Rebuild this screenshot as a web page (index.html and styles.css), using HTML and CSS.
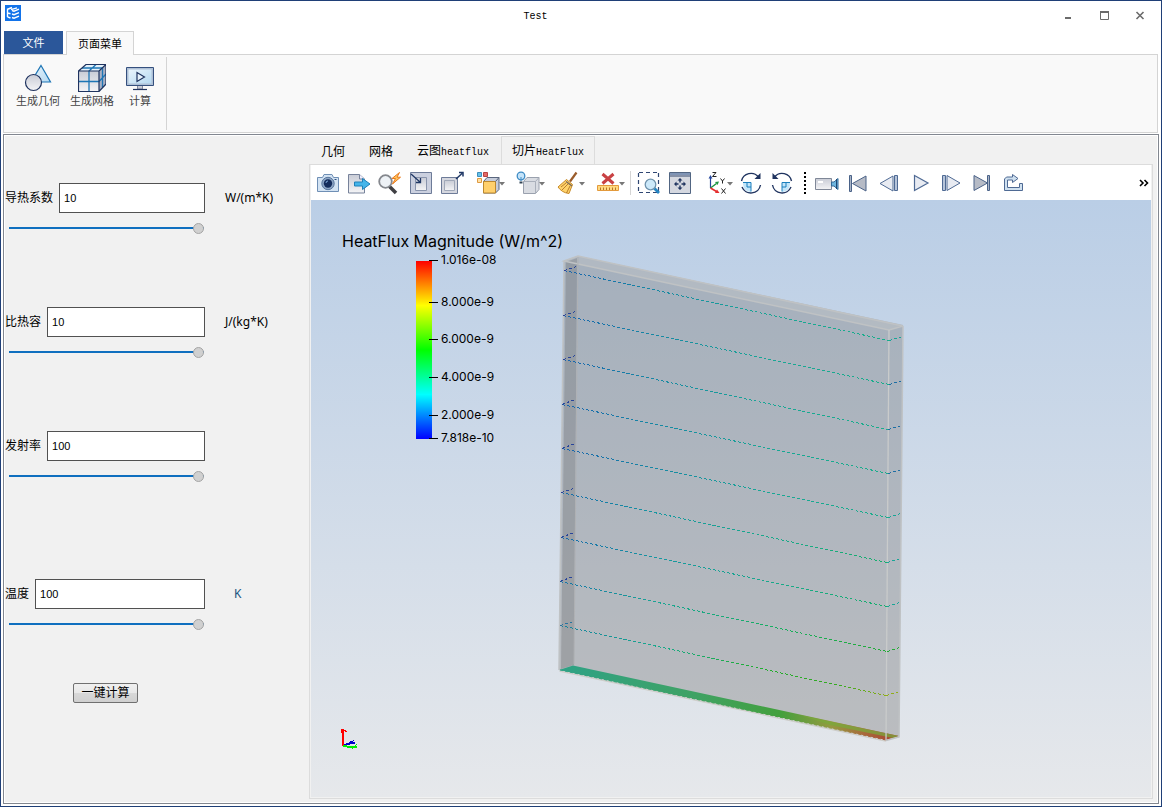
FILE: index.html
```html
<!DOCTYPE html>
<html lang="zh-CN">
<head>
<meta charset="utf-8">
<title>Test</title>
<link rel="stylesheet" href="styles.css">
</head>
<body>
<div class="window">
  <header class="titlebar">
    <svg class="app-icon" viewBox="0 0 16 16" aria-hidden="true">
      <rect width="16" height="16" fill="#1273ea"/>
      <path d="M2 4.500L7 2.500M2.500 4.500V12M2.500 8L5.500 8.800M2.500 11.800L5.500 13M7 5.500L9 6.200L14 4.200M7 9L9 9.700L14 7.700M7 12.500L9 13.200L14 11.200M6 4.700L12 2.800" fill="none" stroke="#fff" stroke-width="1.400"/>
    </svg>
    <h1 class="title">Test</h1>
    <div class="window-buttons">
      <button class="window-button" aria-label="最小化"><svg viewBox="0 0 36 28"><path d="M15 16h6" stroke="#6b6b6b" stroke-width="2"/></svg></button>
      <button class="window-button" aria-label="最大化"><svg viewBox="0 0 36 28"><path d="M14.500 9v8.500h8V9" fill="none" stroke="#6b6b6b"/><path d="M14 10h9" stroke="#6b6b6b" stroke-width="2"/></svg></button>
      <button class="window-button" aria-label="关闭"><svg viewBox="0 0 36 28"><path d="M14.500 10l7 7M21.500 10l-7 7" stroke="#6b6b6b" stroke-width="1.600"/></svg></button>
    </div>
  </header>

  <nav class="ribbon-tabs">
    <button class="ribbon-tab file-tab">文件</button>
    <button class="ribbon-tab current-tab">页面菜单</button>
  </nav>

  <section class="ribbon">
    <div class="ribbon-group">
      <button class="ribbon-button">
        <svg viewBox="24 64 28 28">
          <defs><linearGradient id="silver" x2="0" y2="1"><stop stop-color="#c9ccd6"/><stop offset="1" stop-color="#f4f4f6"/></linearGradient>
          <linearGradient id="sky" x2="1" y2="1"><stop stop-color="#eaf5fc"/><stop offset="1" stop-color="#b5d9f1"/></linearGradient></defs>
          <path d="M41 65.500L50.500 82H31z" fill="url(#sky)" stroke="#1d75b5" stroke-width="1.200"/>
          <circle cx="33.500" cy="82.500" r="8" fill="url(#silver)" stroke="#1f335f" stroke-width="1.200"/>
        </svg>
        <span>生成几何</span>
      </button>
      <button class="ribbon-button">
        <svg viewBox="78 64 28 28">
          <path d="M78.500 71L86 64.500h20L99 71z" fill="#e4f1fa"/>
          <path d="M99 71l7-6.500V84l-7 7.500z" fill="#a9b0c3"/>
          <path d="M78.500 71H99v20.500H78.500z" fill="url(#silver)"/>
          <path d="M78.500 81.500H99l7-7.500M89 91V71l7-6.500M82 68h20.500v19" fill="none" stroke="#1d75b5" stroke-width="1.300"/>
          <path d="M78.500 71L86 64.500h20V84l-7 7.500H78.500zM78.500 71H99v20.500M99 71l7-6.500" fill="none" stroke="#1f335f" stroke-width="1.200"/>
        </svg>
        <span>生成网格</span>
      </button>
      <button class="ribbon-button ribbon-button-short">
        <svg viewBox="126 64 28 28">
          <path d="M126.500 67.500h27v18h-27z" fill="#aebfd5" stroke="#35507e"/>
          <path d="M128.500 69.500h23v14h-23z" fill="url(#sky)"/>
          <path d="M137 72.500v9l7.500-4.500z" fill="#e6f2fb" stroke="#1f335f" stroke-width="1.200"/>
          <path d="M137.500 86v3h5v-3" fill="#c9ccd6" stroke="#8189a0"/><path d="M133 89.500h14" stroke="#1f335f" stroke-width="1.200"/>
        </svg>
        <span>计算</span>
      </button>
    </div>
  </section>

  <main class="workspace">
    <form class="sidebar" onsubmit="return false">
      <div class="field">
        <div class="field-row">
          <label for="conductivity">导热系数</label><input class="field-input" id="conductivity" type="text" value="10"><span class="unit">W/(m*K)</span>
        </div>
        <input class="slider" type="range" min="0" max="100" value="100" aria-label="导热系数">
      </div>
      <div class="field">
        <div class="field-row">
          <label for="capacity">比热容</label><input class="field-input" id="capacity" type="text" value="10"><span class="unit">J/(kg*K)</span>
        </div>
        <input class="slider" type="range" min="0" max="100" value="100" aria-label="比热容">
      </div>
      <div class="field">
        <div class="field-row">
          <label for="emissivity">发射率</label><input class="field-input" id="emissivity" type="text" value="100"><span class="unit"></span>
        </div>
        <input class="slider" type="range" min="0" max="100" value="100" aria-label="发射率">
      </div>
      <div class="field field-last">
        <div class="field-row">
          <label for="temperature">温度</label><input class="field-input" id="temperature" type="text" value="100"><span class="unit unit-short">K</span>
        </div>
        <input class="slider" type="range" min="0" max="100" value="100" aria-label="温度">
      </div>
      <button class="run-button" type="submit">一键计算</button>
    </form>

    <section class="viewer">
      <nav class="view-tabs">
        <button class="view-tab">几何</button>
        <button class="view-tab">网格</button>
        <button class="view-tab">云图<span class="mono">heatflux</span></button>
        <button class="view-tab view-tab-current">切片<span class="mono">HeatFlux</span></button>
      </nav>
      <div class="view-page">
        <div class="toolbar">
          <button class="tool" aria-label="截图"><svg viewBox="312 166 31 34">
            <path d="M317.500 177.500h5l1.500-3h8l1.500 3h5v14h-21z" fill="#d3e3f3" stroke="#6f8fb5"/>
            <circle cx="328" cy="183.500" r="6.200" fill="#8ba4c4" stroke="#58759d"/><circle cx="328" cy="183.500" r="4.200" fill="#142c5c"/><path d="M326 183a2 2 0 0 1 2-2" stroke="#7da7d8" fill="none"/><path d="M334.500 179.500h2" stroke="#31507f"/>
          </svg></button>
          <button class="tool" aria-label="导出"><svg viewBox="343 166 31 34">
            <path d="M348.500 174.500h11l5 4.500v14h-16z" fill="url(#silver)" stroke="#77829a"/><path d="M359.500 174.500v4.500h5" fill="#eef" stroke="#77829a"/>
            <path d="M354.500 182h8v-3.500l7.500 5.500-7.500 5.500V186h-8z" fill="#45b5ea" stroke="#1e80b9"/>
          </svg></button>
          <button class="tool" aria-label="快速查找"><svg viewBox="374 166 31 34">
            <path d="M389 186l7 7" stroke="#3f3f43" stroke-width="3.500"/><circle cx="385.500" cy="181.500" r="6.300" fill="#eef2f6" stroke="#85888e" stroke-width="1.800"/>
            <path d="M399.500 172.500l-7.500 6h3.500l-3 5.500 8-6.800h-3.500z" fill="#ffc35b" stroke="#e87b1f"/>
          </svg></button>
          <button class="tool" aria-label="缩小到框"><svg viewBox="405 166 31 34">
            <path d="M410.500 172.500h21v21h-21z" fill="#cbd0df" stroke="#6d7b98"/><path d="M415.500 177.500h11v13h-11z" fill="url(#silver)" stroke="#8994ac"/>
            <path d="M411 174l9 8M420.500 178v4.500H416" fill="none" stroke="#1f3765" stroke-width="1.300"/>
          </svg></button>
          <button class="tool" aria-label="放大框"><svg viewBox="436 166 31 34">
            <path d="M441.500 177.500h16v16h-16z" fill="#d5d7df" stroke="#6d7b98"/><path d="M444.500 180.500h10v10h-10z" fill="url(#silver)" stroke="#a0a8b8"/>
            <path d="M456 179l6-5.500M459 172.500h4v4" fill="none" stroke="#1f3765" stroke-width="1.500"/>
          </svg></button>
          <button class="tool tool-menu" aria-label="着色"><svg viewBox="467 166 40 34">
            <path d="M477.500 172.500h4v4h-4z" fill="#67c1e9" stroke="#3c8fbd"/><path d="M483.500 172.500h4v4h-4z" fill="#e36a68" stroke="#b84442"/><path d="M477.500 178.500h4v4h-4z" fill="#ffe0a6" stroke="#de9a42"/>
            <path d="M483.500 181.500l3.500-4h12v12l-3.500 3.500h-12z" fill="#c6ccda" stroke="#59667e"/><path d="M483.500 181.500h12v11.500h-12z" fill="#ffd06c" stroke="#bd882e"/><path d="M495.500 181.500l3.500-4" stroke="#59667e"/><path d="M499 182h6l-3 3.500z" fill="#777"/>
          </svg></button>
          <button class="tool tool-menu" aria-label="光照"><svg viewBox="507 166 40 34">
            <path d="M523.500 181.500l3.500-4h12v12l-3.500 4h-12z" fill="#d9dce2" stroke="#9aa1ae"/><path d="M523.500 181.500h12v12M535.500 181.500l3.500-4" fill="none" stroke="#aab0bb"/>
            <circle cx="521" cy="176" r="3.800" fill="#c5e4fa" stroke="#3e8bc4" stroke-width="1.300"/><path d="M521 177v4" stroke="#3e8bc4"/><path d="M519.500 182.500h3" stroke="#345" stroke-width="2"/><path d="M539 182h6l-3 3.500z" fill="#777"/>
          </svg></button>
          <button class="tool tool-menu" aria-label="清理"><svg viewBox="547 166 40 34">
            <path d="M576.500 172.500l-6.500 9" stroke="#9a5c2c" stroke-width="2.200"/><path d="M566.500 179.500l6 5-3.500 9c-5-.5-8.500-3-11-6.500z" fill="#ffd36b" stroke="#c88a28"/><path d="M566 181.500l6 4.500" stroke="#7e6c58" stroke-width="1.500"/><path d="M568 184l-6 6M570 186l-3.500 7M566 183l-5 4" stroke="#b27423" stroke-width=".9"/><path d="M579 182h6l-3 3.500z" fill="#777"/>
          </svg></button>
          <button class="tool tool-menu" aria-label="删除测量"><svg viewBox="587 166 40 34">
            <path d="M602.500 174l11 9.500M613.500 174l-11 9.500" stroke="#c94143" stroke-width="3"/><path d="M597.500 185.500h21v5h-21z" fill="#ffd980" stroke="#e39a3c"/><path d="M600.500 190v-2.500M603.500 190v-2.500M606.500 190v-2.500M609.500 190v-2.500M612.500 190v-2.500M615.500 190v-2.500" stroke="#b9752a"/><path d="M619 182h6l-3 3.500z" fill="#777"/>
          </svg></button>
          <span class="tool-divider"></span>
          <button class="tool" aria-label="框选放大"><svg viewBox="634 166 31 34">
            <path d="M639 172.500h20M638.500 173v20M658.500 173v20M639 192.500h20" stroke="#2f4672" stroke-dasharray="4 3" stroke-width="1.200"/><path d="M654 188l5 5" stroke="#2486c4" stroke-width="2.800"/><circle cx="650.500" cy="184.500" r="5.300" fill="#cce9fa" stroke="#6f93ad" stroke-width="1.300"/>
          </svg></button>
          <button class="tool" aria-label="适合窗口"><svg viewBox="665 166 31 34">
            <path d="M669.500 172.500h21v21h-21z" fill="#d5d8e0" stroke="#516582"/><path d="M670 174h20" stroke="#7f94b5" stroke-width="2"/><path d="M670 176h20" stroke="#34496f"/>
            <path d="M680 178l2.500 2.500h-5zM680 190l2.500-2.500h-5zM674 184l2.500-2.500v5zM686 184l-2.500-2.500v5z" fill="#1f335f"/><path d="M680 180v2.500M680 185.500v2.500M676 184h2.500M681.500 184h2.500" stroke="#1f335f" stroke-width="1.400"/>
          </svg></button>
          <button class="tool tool-menu" aria-label="坐标轴"><svg viewBox="696 166 40 34">
            <path d="M710.500 188v-10" stroke="#25469c" stroke-width="1.200"/><path d="M710.500 175l2 3.500h-4z" fill="#25469c"/><path d="M710.500 188l6-4.500" stroke="#1d9641" stroke-width="1.500"/><path d="M719 181.500l-4 .5 2.500 3z" fill="#1d9641"/><path d="M710.500 188l6 3.500" stroke="#e52e2e" stroke-width="1.500"/><path d="M719.500 193l-4.500 0 2-3.500z" fill="#e52e2e"/>
            <path d="M712.500 172.500h3.500l-3.500 4h4M720.500 178.500l2 2.500 2-2.500M722.500 181v2.500M721.500 188.500l4 5M725.500 188.500l-4 5" stroke="#222" fill="none"/><path d="M727 182h6l-3 3.500z" fill="#777"/>
          </svg></button>
          <button class="tool" aria-label="顺时针旋转"><svg viewBox="736 166 31 34">
            <path d="M743 183h8v9c-5-.5-8-3.500-8-9z" fill="#c3e6fa"/><path d="M743 182.500h8v9M747 183v4h4" fill="none" stroke="#1b7fbd"/><path d="M741.500 181a9.700 9.700 0 0 1 17-4M760.500 185a9.700 9.700 0 0 1-18.500 2" fill="none" stroke="#1f335f" stroke-width="1.400"/><path d="M760.500 173v6h-6z" fill="#1f335f"/>
          </svg></button>
          <button class="tool" aria-label="逆时针旋转"><svg viewBox="767 166 31 34">
            <path d="M782 183h8c0 5.500-3 8.500-8 9z" fill="#c3e6fa"/><path d="M790 182.500h-8v9M786 183v4h-4" fill="none" stroke="#1b7fbd"/><path d="M791.500 181a9.700 9.700 0 0 0-17-4M772.500 185a9.700 9.700 0 0 0 18.500 2" fill="none" stroke="#1f335f" stroke-width="1.400"/><path d="M772.500 173v6h6z" fill="#1f335f"/>
          </svg></button>
          <span class="tool-grip"></span>
          <button class="tool" aria-label="录制"><svg viewBox="811 166 31 34">
            <path d="M815.500 178.500h16v11h-16z" fill="url(#silver)" stroke="#7f8797"/><path d="M818 182h5" stroke="#fff" stroke-width="2"/><path d="M831.500 182l2.500 0 4-3.500v11l-4-3.500h-2.500z" fill="#6fb6df" stroke="#326997"/><path d="M836.500 179v10" stroke="#1f4672"/>
          </svg></button>
          <button class="tool" aria-label="第一帧"><svg viewBox="842 166 31 34"><path d="M849.500 175.500h2v16h-2z" fill="#a8b4c6" stroke="#4a6288"/><path d="M866 176v15l-13.500-7.500z" fill="#b6bbc6" stroke="#4a6288"/></svg></button>
          <button class="tool" aria-label="上一帧"><svg viewBox="873 166 31 34"><path d="M893 176v15l-13-7.500z" fill="#e8ebf2" stroke="#4f6a94"/><path d="M894.500 175.500h3v15h-3z" fill="#b6c4d9" stroke="#4f6a94"/></svg></button>
          <button class="tool" aria-label="播放"><svg viewBox="904 166 31 34"><path d="M914.500 175.500v15l13.500-7.500z" fill="#e8ebf2" stroke="#4f6a94" stroke-width="1.200"/></svg></button>
          <button class="tool" aria-label="下一帧"><svg viewBox="935 166 31 34"><path d="M942.500 175.500h3v15h-3z" fill="#b6c4d9" stroke="#4f6a94"/><path d="M947 175.500v15l13-7.500z" fill="#e8ebf2" stroke="#4f6a94"/></svg></button>
          <button class="tool" aria-label="最后一帧"><svg viewBox="966 166 31 34"><path d="M974 175.500v15l13.500-7.500z" fill="#b6bbc6" stroke="#4a6288"/><path d="M987.500 175.500h2v15h-2z" fill="#a8b4c6" stroke="#4a6288"/></svg></button>
          <button class="tool" aria-label="循环"><svg viewBox="997 166 31 34"><path d="M1004.500 190.500V179l2-2h6v-2.500l5.500 4-5.500 4V180h-5v7.500h12v-4h3v7z" fill="#cfe0ef" stroke="#4f6a94"/></svg></button>
          <button class="tool-more" aria-label="更多"><svg viewBox="0 0 10 8"><path d="M1 1l3 3-3 3M5.500 1l3 3-3 3" fill="none" stroke="#000" stroke-width="1.600"/></svg></button>
        </div>

        <svg class="viewport" viewBox="311 200 840 597" role="img" aria-label="HeatFlux Magnitude">
          <defs>
            <linearGradient id="scale" x2="0" y2="1"><stop stop-color="#f00"/><stop offset=".25" stop-color="#ff0"/><stop offset=".5" stop-color="#0f0"/><stop offset=".75" stop-color="#0ff"/><stop offset="1" stop-color="#00f"/></linearGradient>
            <linearGradient id="floor" gradientUnits="userSpaceOnUse" x1="559" x2="899" y1="0" y2="0"><stop stop-color="#2ea286"/><stop offset=".4" stop-color="#3fa264"/><stop offset=".65" stop-color="#43a03d"/><stop offset=".8" stop-color="#949a40"/><stop offset=".9" stop-color="#a9683b"/><stop offset="1" stop-color="#a9402f"/></linearGradient>
            <linearGradient id="cool" gradientUnits="userSpaceOnUse" x1="563" x2="889" y1="0" y2="0"><stop stop-color="#1763ae"/><stop offset=".25" stop-color="#1684a5"/><stop offset=".6" stop-color="#18a596"/><stop offset="1" stop-color="#18ae8a"/></linearGradient>
            <linearGradient id="fresh" gradientUnits="userSpaceOnUse" x1="560" x2="888" y1="0" y2="0"><stop stop-color="#1669ac"/><stop offset=".3" stop-color="#1698a0"/><stop offset=".65" stop-color="#18a98a"/><stop offset="1" stop-color="#16ae6c"/></linearGradient>
            <linearGradient id="mild" gradientUnits="userSpaceOnUse" x1="560" x2="888" y1="0" y2="0"><stop stop-color="#1675a8"/><stop offset=".3" stop-color="#1aa594"/><stop offset=".65" stop-color="#15ae60"/><stop offset="1" stop-color="#22ac35"/></linearGradient>
            <linearGradient id="warm" gradientUnits="userSpaceOnUse" x1="560" x2="888" y1="0" y2="0"><stop stop-color="#16819f"/><stop offset=".3" stop-color="#18a98d"/><stop offset=".6" stop-color="#1ead30"/><stop offset=".85" stop-color="#36aa20"/><stop offset="1" stop-color="#91ad18"/></linearGradient>
          </defs>
          <text class="legend-title" x="342" y="247">HeatFlux Magnitude (W/m^2)</text>
          <rect x="416" y="261" width="16" height="178" fill="url(#scale)"/>
          <path d="M429 260.500h9M429 302.500h9M429 339.500h9M429 377.500h9M429 415.500h9M429 438.500h9" stroke="#000"/>
          <g class="legend-label">
            <text x="441" y="264">1.016e-08</text><text x="441" y="306">8.000e-9</text><text x="441" y="343">6.000e-9</text><text x="441" y="381">4.000e-9</text><text x="441" y="419">2.000e-9</text><text x="441" y="442">7.818e-10</text>
          </g>

          <path d="M564 261L578 256 903 325 899 736 886 740 559 670z" fill="#808080" fill-opacity=".4"/>
          <path d="M564 261L578 256 903 325 889 330z" fill="#c9cbcc" fill-opacity=".35"/>
          <path d="M566 262L577 258 574 665 561 669z" fill="#77787b" fill-opacity=".38"/>
          <path d="M559 670L573 665.500 899 736 886 740z" fill="url(#floor)"/>
          <path d="M800 715L899 736 893 738 830 725z" fill="#79a83b" fill-opacity=".75"/>
          <path d="M559.500 671L886 741" stroke="#cdcdc9" stroke-width="1.500" fill="none"/>
          <path d="M560 670L886 740" stroke="url(#floor)" stroke-dasharray="3 2" fill="none"/>
          <path d="M564 261L578 256 903 326 889 330zM564 261L559 670M903 326L899 737 886 740.500" fill="none" stroke="#bfc2c4" stroke-width="1.500"/>
          <path d="M889 330L886 740" stroke="#c9cbcb" stroke-width="1.300"/>
          <path d="M578 257L574 664" stroke="#afb1b4"/>

          <g fill="none" stroke-dasharray="3 2" shape-rendering="crispEdges">
            <path d="M564 270.500L889 340.500M563 315.500L889 384.500M563 359.500L888 429.500M562 404.500L888 473.500M562 448.500L888 517.500" stroke="url(#cool)"/>
            <path d="M561 492.500L887 562.500M561 537.500L887 606.500" stroke="url(#fresh)"/>
            <path d="M560 581.500L887 651.500" stroke="url(#mild)"/>
            <path d="M560 625.500L886 695.500" stroke="url(#warm)"/>
            <path d="M564 270.500l13-4M563 315.500l13-4M563 359.500l13-4M562 404.500l13-5M562 448.500l13-5M561 492.500l13-4M561 537.500l13-5M560 581.500l13-5" stroke="#28449b"/>
            <path d="M560 625.500l14-4" stroke="#2874a0"/>
            <path d="M889 340.500l14-4M888 517.500l13-4M887 562.500l14-4M887 606.500l13-4" stroke="#18a596"/>
            <path d="M889 384.500l14-4M888 429.500l14-4M888 473.500l14-4" stroke="#1d6ea3"/>
            <path d="M887 651.500l13-4" stroke="#22ac35"/><path d="M886 695.500l14-4" stroke="#91ad18"/>
          </g>

          <g fill="none" shape-rendering="crispEdges">
            <path d="M343 746v-17" stroke="#f00" stroke-width="2"/><path d="M341 733l1-4 2 1 3 2" stroke="#f00"/>
            <path d="M343 746l7-3h5" stroke="#00c" stroke-width="2"/><path d="M349 745l5-5M352 741l-2 1" stroke="#00c"/>
            <path d="M343 746l8 1h6" stroke="#0e0" stroke-width="2"/><path d="M352 749l5-5" stroke="#0e0"/>
          </g>
        </svg>
      </div>
    </section>
  </main>
</div>
</body>
</html>
```
FILE: styles.css
```css
* {
  box-sizing: border-box;
}

body {
  margin: 0;
  font: 12px/16px "Noto Sans", "Noto Sans CJK SC", sans-serif;
  color: #000;
}

button {
  margin: 0;
  padding: 0;
  border: 0;
  background: none;
  font: inherit;
  color: inherit;
}

svg {
  display: block;
}

.window {
  display: flex;
  flex-direction: column;
  height: 100vh;
  padding: 0 2px 2px;
  border: 1px solid #1f3f77;
  background: #fff;
}

.titlebar {
  display: flex;
  flex: none;
  height: 30px;
  padding: 0 1px 0 2px;
}

.app-icon {
  width: 16px;
  height: 16px;
  margin-top: 4px;
}

.title {
  flex: 1;
  margin: 0;
  font: 10px/32px "Liberation Mono", monospace;
  text-align: center;
}

.window-buttons {
  display: flex;
}

.window-button svg {
  width: 36px;
  height: 28px;
}

.ribbon-tabs {
  display: flex;
  flex: none;
  gap: 3px;
  padding-left: 1px;
  font-size: 11px;
}

.ribbon-tab {
  height: 23px;
}

.file-tab {
  width: 59px;
  background: #2b579a;
  color: #fff;
}

.current-tab {
  position: relative;
  width: 68px;
  height: 24px;
  margin-bottom: -1px;
  border: 1px solid #d4d4d4;
  border-bottom: 0;
  background: #f9f9f9;
}

.ribbon {
  display: flex;
  flex: none;
  height: 79px;
  margin-right: 1px;
  padding: 2px 0;
  border: 1px solid #d4d4d4;
  background: #f9f9f9;
}

.ribbon-group {
  display: flex;
  gap: 10px;
  align-items: flex-start;
  padding: 7px 10px 0 12px;
  border-right: 1px solid #d4d4d4;
}

.ribbon-button {
  display: flex;
  flex-direction: column;
  gap: 1px;
  align-items: center;
  font-size: 11px;
  color: #444;
}

.ribbon-button-short {
  width: 32px;
}

.ribbon-button svg {
  width: 28px;
  height: 28px;
}

.workspace {
  display: flex;
  flex: 1;
  min-height: 0;
  margin-top: 1px;
  border: 1px solid #828790;
  outline: 1px solid #fff;
  outline-offset: -2px;
  background: #f1f1f1;
}

.sidebar {
  flex: none;
  width: 305px;
  padding: 48px 0 0 1px;
}

.field {
  height: 54px;
  margin-bottom: 70px;
}

.field-last {
  margin-top: 94px;
  margin-bottom: 50px;
}

.field-row {
  display: flex;
  align-items: center;
  width: 100%;
}

.field-input {
  flex: 1;
  min-width: 0;
  height: 30px;
  margin-left: 6px;
  padding: 0 4px;
  border: 1px solid #515151;
  background: #fff;
  font: 11px "Liberation Sans", sans-serif;
  color: #000;
}

.unit {
  flex: none;
  width: 104px;
  padding-left: 20px;
}

.unit-short {
  padding-left: 29px;
  color: #1b5480;
}

.slider {
  display: block;
  width: 195px;
  height: 12px;
  margin: 9px 0 0 4px;
  appearance: none;
  background: linear-gradient(#0f6fbf, #0f6fbf) 0 50% / 100% 2px no-repeat;
}

.slider::-webkit-slider-thumb {
  width: 11px;
  height: 11px;
  border: 1px solid #a5a5a5;
  border-radius: 50%;
  appearance: none;
  background: #d0d0d0;
}

.run-button {
  display: block;
  width: 65px;
  height: 20px;
  margin-left: 68px;
  border: 1px solid #707070;
  border-radius: 2px;
  background: linear-gradient(#f0f0f0, #e8e8e8 49%, #d8d8d8 50%, #d0d0d0);
  line-height: 18px;
}

.viewer {
  display: flex;
  flex: 1;
  flex-direction: column;
  min-width: 0;
  padding: 1px 5px 4px 0;
}

.view-tabs {
  display: flex;
  flex: none;
  height: 28px;
}

.view-tab {
  padding: 3px 12px 0;
}

.view-tab-current {
  padding: 3px 10px 0;
  border: 1px solid #dcdcdc;
  border-bottom: 0;
}

.mono {
  font: 10px/16px "Liberation Mono", monospace;
}

.view-page {
  display: flex;
  flex: 1;
  flex-direction: column;
  min-height: 0;
  padding: 0 1px 1px;
  border: 1px solid #dcdcdc;
}

.toolbar {
  display: flex;
  flex: none;
  align-items: center;
  height: 35px;
  padding: 0 2px 0 1px;
  background: #fff;
}

.tool svg {
  width: 31px;
  height: 34px;
}

.tool-menu svg {
  width: 40px;
}

.tool-divider {
  width: 1px;
  height: 24px;
  margin: 0 3px;
  background: #d5d5d5;
}

.tool-grip {
  height: 22px;
  margin: 0 5px 0 6px;
  border-left: 2px dotted #000;
}

.tool-more {
  margin-left: auto;
}

.tool-more svg {
  width: 10px;
  height: 8px;
}

.viewport {
  flex: 1;
  width: 100%;
  min-height: 0;
  background: linear-gradient(#bacee6, #e6e8eb);
}

.legend-title {
  font: 16px Inter, sans-serif;
}

.legend-label {
  font: 12px Inter, sans-serif;
}
```
